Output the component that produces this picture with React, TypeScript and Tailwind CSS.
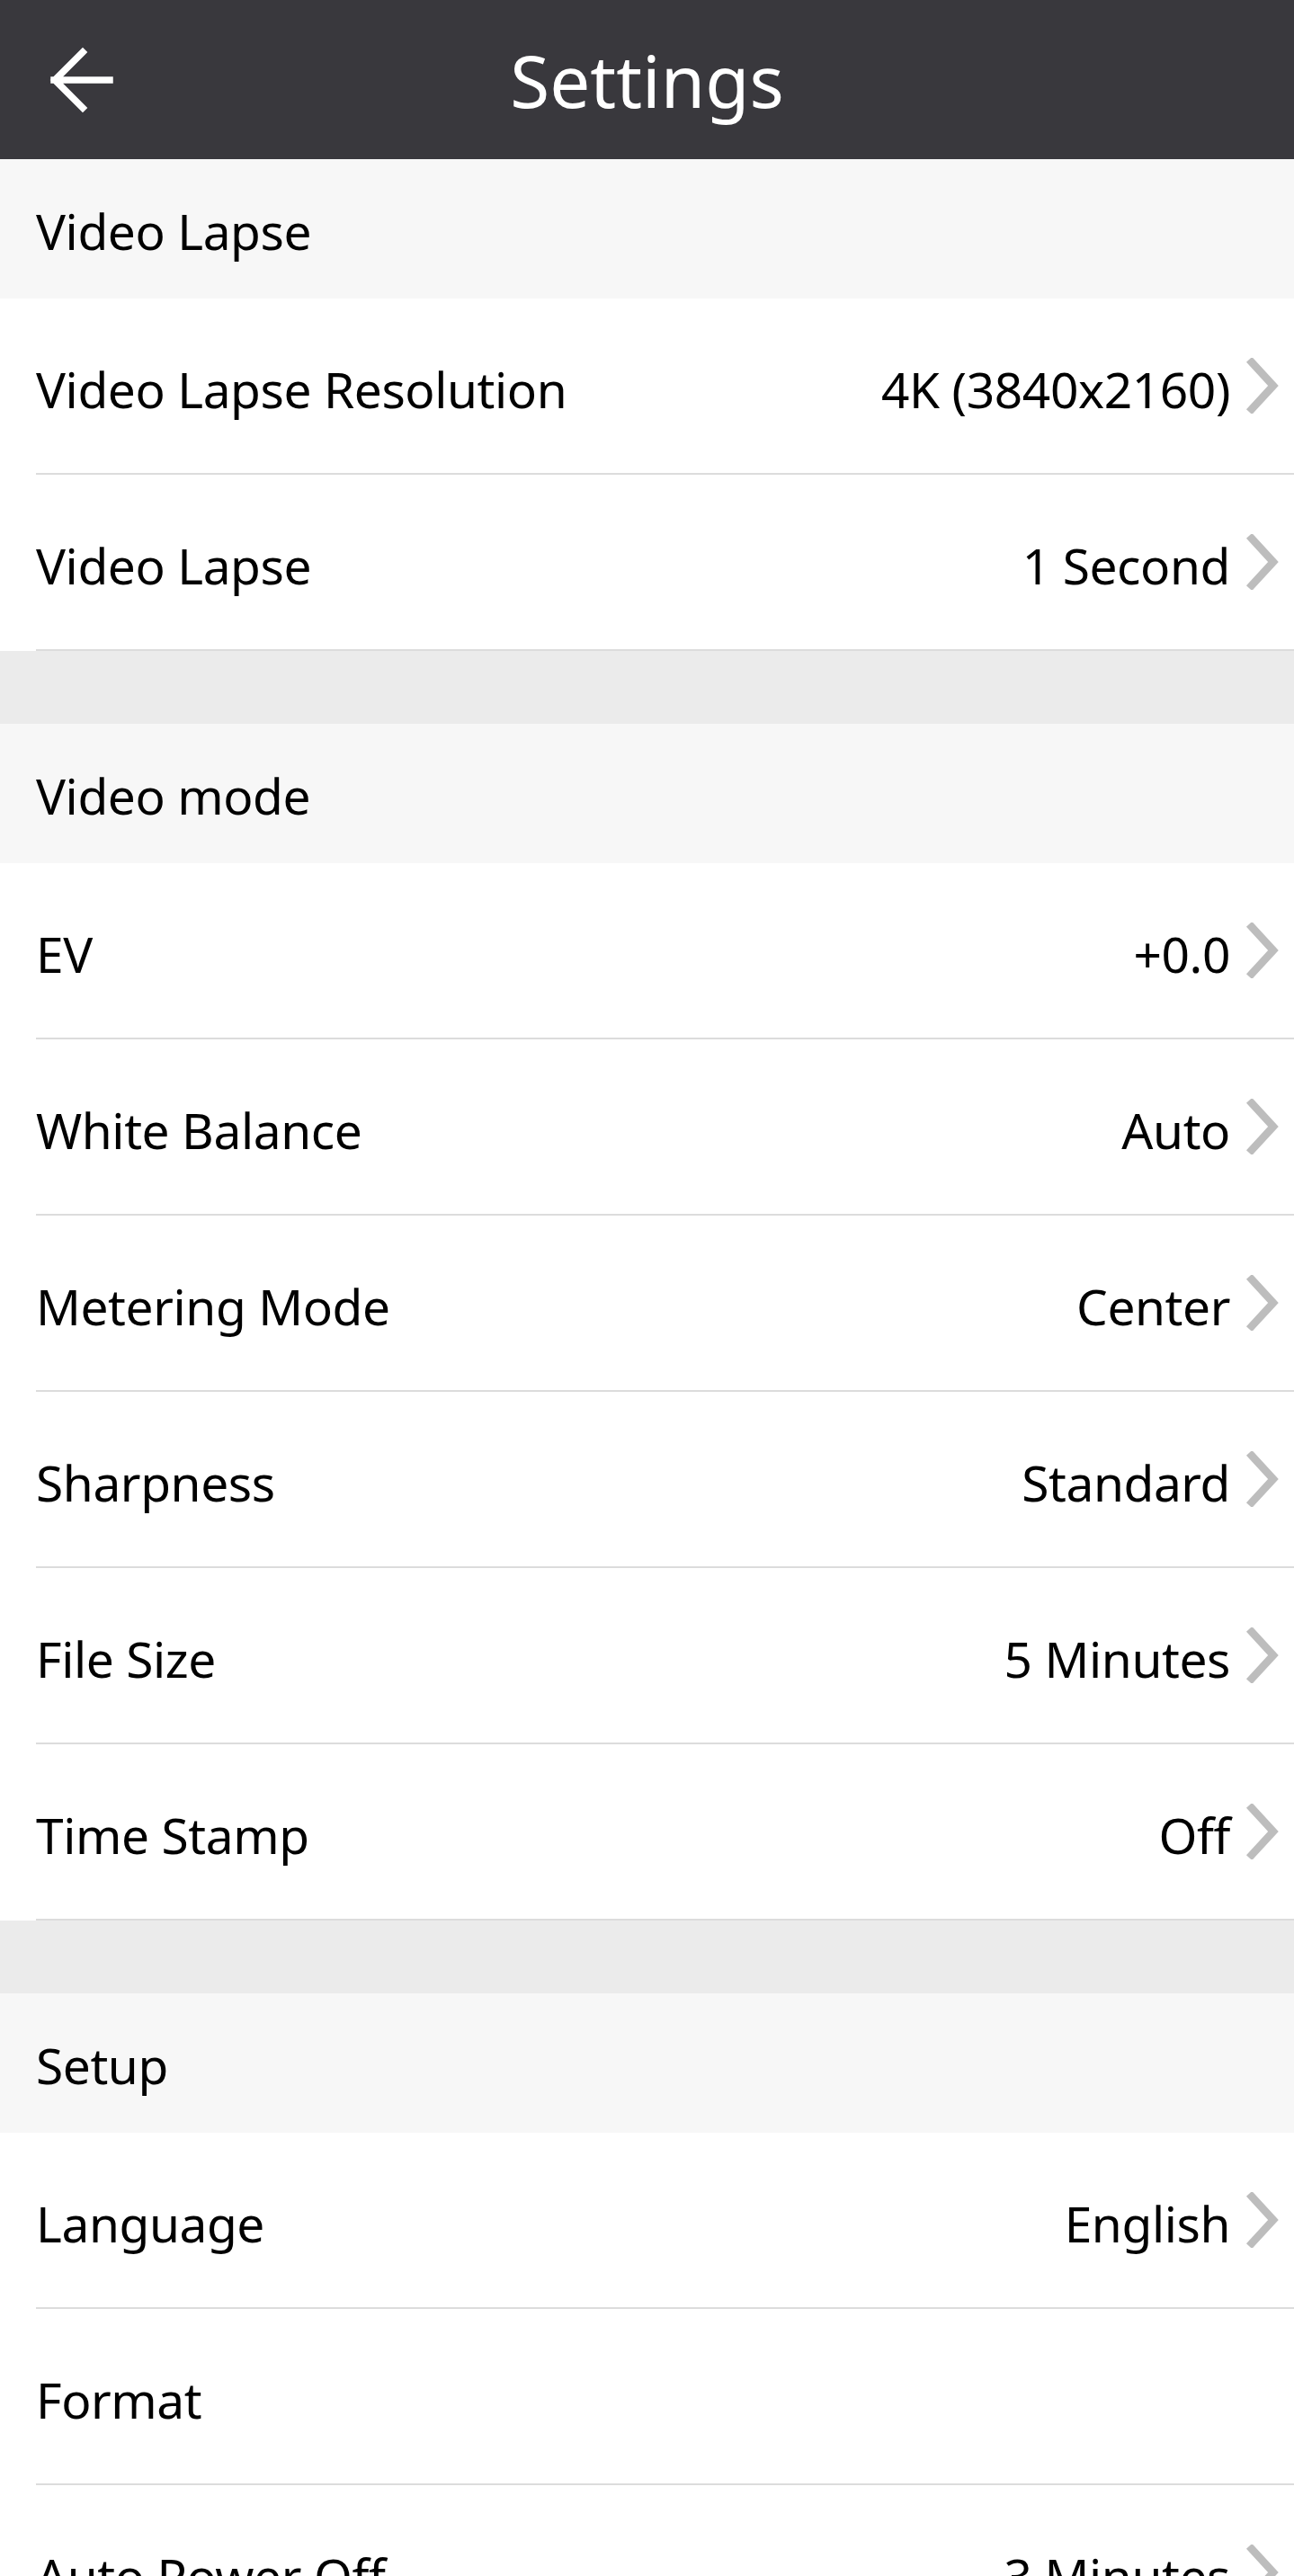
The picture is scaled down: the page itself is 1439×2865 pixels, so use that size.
type Item = {
  label: string;
  value?: string;
  arrow?: boolean;
};

type Section = {
  title: string;
  items: Item[];
};

const sections: Section[] = [
  {
    title: "Video Lapse",
    items: [
      { label: "Video Lapse Resolution", value: "4K (3840x2160)", arrow: true },
      { label: "Video Lapse", value: "1 Second", arrow: true },
    ],
  },
  {
    title: "Video mode",
    items: [
      { label: "EV", value: "+0.0", arrow: true },
      { label: "White Balance", value: "Auto", arrow: true },
      { label: "Metering Mode", value: "Center", arrow: true },
      { label: "Sharpness", value: "Standard", arrow: true },
      { label: "File Size", value: "5 Minutes", arrow: true },
      { label: "Time Stamp", value: "Off", arrow: true },
    ],
  },
  {
    title: "Setup",
    items: [
      { label: "Language", value: "English", arrow: true },
      { label: "Format" },
      { label: "Auto Power Off", value: "3 Minutes", arrow: true },
    ],
  },
];

function Chevron() {
  return (
    <svg width="40" height="62" viewBox="0 0 40 62" className="shrink-0">
      <path
        d="M8 5 L32 31 L8 57"
        fill="none"
        stroke="#bdbdbd"
        strokeWidth="8.5"
        strokeLinecap="square"
        strokeLinejoin="miter"
      />
    </svg>
  );
}

function Row({ item }: { item: Item }) {
  return (
    <div className="h-[196px] pl-[40px] bg-white">
      <div className="h-full flex items-center justify-between border-b-2 border-[#dcdcdc] pr-[15px]">
        <span className="text-[55px] tracking-[-0.4px] text-black pt-[8px]">{item.label}</span>
        {item.value && (
          <div className="flex items-center gap-[16px]">
            <span className="text-[55px] tracking-[-0.4px] text-black pt-[8px]">{item.value}</span>
            {item.arrow && <Chevron />}
          </div>
        )}
      </div>
    </div>
  );
}

export default function App() {
  return (
    <div
      className="w-[1439px] min-h-[2865px] bg-white overflow-hidden"
      style={{ fontFamily: '"Noto Sans", "Open Sans", sans-serif' }}
    >
      <header className="h-[177px] bg-[#39383d] grid grid-cols-[1fr_auto_1fr] items-center">
        <div className="pl-[50px] flex items-center">
          <svg width="80" height="80" viewBox="0 0 80 80">
            <path
              d="M10 40 H72 M42 9 L11 40 L42 71"
              fill="none"
              stroke="#ffffff"
              strokeWidth="7.5"
              strokeLinecap="square"
            />
          </svg>
        </div>
        <h1 className="text-[80px] text-white leading-none">Settings</h1>
        <div />
      </header>

      {sections.map((section, i) => (
        <div key={section.title}>
          {i > 0 && <div className="h-[81px] bg-[#ebebeb]" />}
          <div className="h-[155px] bg-[#f7f7f7] flex items-center pl-[40px]">
            <span className="text-[55px] tracking-[-0.4px] text-black pt-[6px]">{section.title}</span>
          </div>
          {section.items.map((item) => (
            <Row key={section.title + item.label} item={item} />
          ))}
        </div>
      ))}
    </div>
  );
}
